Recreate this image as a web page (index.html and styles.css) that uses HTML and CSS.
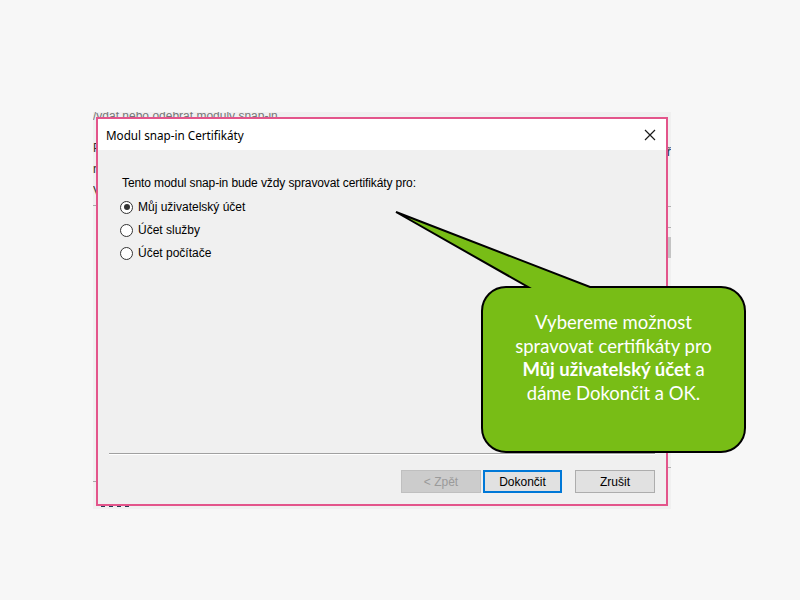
FILE: index.html
```html
<!DOCTYPE html>
<html lang="cs">
<head>
<meta charset="utf-8">
<title>Modul snap-in Certifikáty</title>
<link rel="stylesheet" href="styles.css">
</head>
<body>
<div class="slide">
  <div class="bgwin">
    <div class="bg-top">/ydat nebo odebrat moduly snap-in</div>
    <div class="bg-left">
      <span class="bg-l1">P</span>
      <span class="bg-l2">r</span>
      <span class="bg-l3">V</span>
    </div>
    <div class="bg-rule bg-rule-l"></div>
    <div class="bg-rule bg-rule-l2"></div>
    <div class="bg-right">
      <span class="bg-r1">ř</span>
      <div class="bg-r-line r-a"></div>
      <div class="bg-r-line r-b"></div>
      <div class="bg-r-block"></div>
      <div class="bg-r-line r-c"></div>
    </div>
    <div class="bg-marks">
      <i></i><i></i><i></i><i></i>
    </div>
  </div>

  <div class="dialog">
    <div class="titlebar">
      <span class="title">Modul snap-in Certifikáty</span>
      <svg class="close" width="12" height="12" viewBox="0 0 12 12">
        <path d="M1 1 L11 11 M11 1 L1 11" stroke="#1a1a1a" stroke-width="1.2" fill="none"/>
      </svg>
    </div>
    <div class="content">
      <div class="prompt">Tento modul snap-in bude vždy spravovat certifikáty pro:</div>
      <div class="options">
        <label class="opt"><span class="radio checked"></span>Můj uživatelský účet</label>
        <label class="opt"><span class="radio"></span>Účet služby</label>
        <label class="opt"><span class="radio"></span>Účet počítače</label>
      </div>
    </div>
    <div class="sep"></div>
    <div class="buttons">
      <button class="btn disabled">&lt; Zpět</button>
      <button class="btn default">Dokončit</button>
      <button class="btn cancel">Zrušit</button>
    </div>
  </div>

  <svg class="callout-shape" width="800" height="600" viewBox="0 0 800 600">
    <path d="M506 287 L528 287 L396 212 L590 287 L721 287 A24 24 0 0 1 745 311 L745 428 A24 24 0 0 1 721 452 L506 452 A24 24 0 0 1 482 428 L482 311 A24 24 0 0 1 506 287 Z"
      fill="#78bd16" stroke="#000" stroke-width="2" stroke-linejoin="miter"/>
  </svg>
  <div class="callout-text">
    Vybereme možnost<br>spravovat certifikáty pro<br><b>Můj uživatelský účet</b> a<br>dáme Dokončit a OK.
  </div>
</div>
</body>
</html>
```

FILE: styles.css
```css
html, body {
  margin: 0;
  padding: 0;
}
body {
  background: #f7f7f7;
  font-family: "Liberation Sans", Arial, sans-serif;
}
.slide {
  position: relative;
  width: 800px;
  height: 600px;
  overflow: hidden;
  background: #f7f7f7;
}

/* background window behind the dialog */
.bgwin {
  position: absolute;
  left: 93px;
  top: 112px;
  width: 578px;
  height: 397px;
  background: #f0f0f0;
  overflow: hidden;
  color: #444;
  font-size: 12px;
}
.bg-top {
  position: absolute;
  left: 0;
  top: -3px;
  color: #777;
  font-size: 12px;
}
.bg-left span {
  position: absolute;
  left: 0;
  font-size: 12px;
  color: #333;
}
.bg-l1 { top: 29px; }
.bg-l2 { top: 50px; }
.bg-l3 { top: 72px; }
.bg-rule {
  position: absolute;
  left: 0;
  width: 4px;
  height: 1px;
  background: #a8a8a8;
}
.bg-rule-l { top: 93px; }
.bg-rule-l2 { top: 369px; }
.bg-right {
  position: absolute;
  left: 573px;
  top: 0;
  width: 5px;
  height: 100%;
}
.bg-r1 {
  position: absolute;
  left: 1px;
  top: 33px;
  font-size: 12px;
  color: #234;
}
.bg-r-line {
  position: absolute;
  left: 0;
  width: 5px;
  height: 1px;
  background: #b0b0b0;
}
.r-a { top: 94px; }
.r-b { top: 115px; }
.r-c { top: 355px; }
.bg-r-block {
  position: absolute;
  left: 0;
  top: 125px;
  width: 5px;
  height: 21px;
  background: #c4c4c4;
}
.bg-marks {
  position: absolute;
  left: 8px;
  top: 393px;
  display: flex;
  gap: 4px;
}
.bg-marks i {
  display: block;
  width: 4px;
  height: 2px;
  background: #2a3a55;
}

/* dialog */
.dialog {
  position: absolute;
  left: 96px;
  top: 117px;
  width: 568px;
  height: 385px;
  border: 2px solid #e3558b;
  background: #f0f0f0;
  display: flex;
  flex-direction: column;
}
.titlebar {
  height: 31px;
  background: #ffffff;
  display: flex;
  align-items: center;
  justify-content: space-between;
  padding: 0 10px 0 8px;
  flex: none;
}
.title {
  font-family: "Noto Sans", "Open Sans", sans-serif;
  font-size: 11.7px;
  color: #000;
  margin-top: 1px;
}
.close {
  display: block;
  margin-top: 1px;
}
.content {
  flex: 1;
  padding: 26px 0 0 24px;
  font-size: 12px;
  color: #000;
}
.prompt {
  line-height: 14px;
  letter-spacing: -0.1px;
}
.options {
  margin-top: 10px;
  display: flex;
  flex-direction: column;
  gap: 9px;
}
.opt {
  display: flex;
  align-items: center;
  height: 14px;
  line-height: 14px;
}
.radio {
  width: 11px;
  height: 11px;
  border: 1px solid #333;
  border-radius: 50%;
  background: #fff;
  margin: 0 5px 0 -2px;
  position: relative;
  flex: none;
}
.radio.checked::after {
  content: "";
  position: absolute;
  left: 2.5px;
  top: 2.5px;
  width: 6px;
  height: 6px;
  border-radius: 50%;
  background: #333;
}
.sep {
  height: 1px;
  margin: 0 11px 0 11px;
  background: #a0a0a0;
  border-bottom: 1px solid #fff;
  flex: none;
}
.buttons {
  display: flex;
  justify-content: flex-end;
  padding: 15px 11px 11px 0;
  flex: none;
}
.btn {
  width: 80px;
  height: 23px;
  box-sizing: border-box;
  font-family: "Liberation Sans", Arial, sans-serif;
  font-size: 12px;
  padding: 0;
  background: #e1e1e1;
  border: 1px solid #adadad;
  color: #000;
}
.btn.disabled {
  background: #cccccc;
  border-color: #bfbfbf;
  color: #9a9a9a;
}
.btn.default {
  border: 2px solid #0078d7;
  margin-left: 2px;
  width: 79px;
}
.btn.cancel {
  margin-left: 13px;
}

/* callout */
.callout-shape {
  position: absolute;
  left: 0;
  top: 0;
  pointer-events: none;
}
.callout-text {
  position: absolute;
  left: 482px;
  top: 287px;
  width: 263px;
  padding-top: 24px;
  text-align: center;
  font-family: Lato, "Open Sans", sans-serif;
  font-size: 18.5px;
  line-height: 23.6px;
  color: #ffffff;
}
.callout-text b {
  font-weight: 700;
}
```
